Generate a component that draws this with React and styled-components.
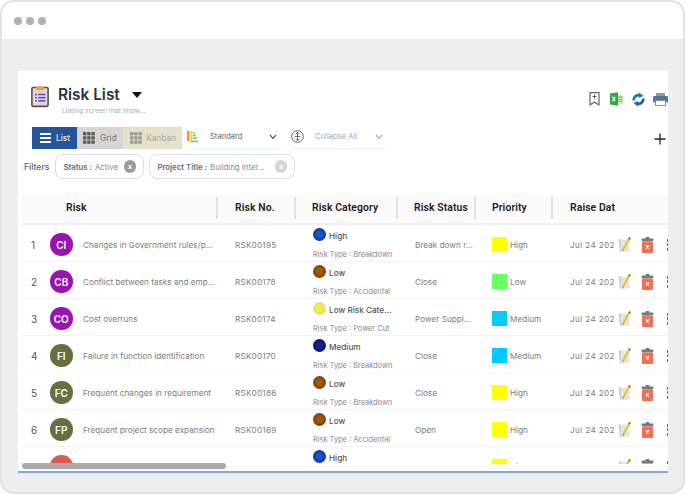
import React from "react";
import styled, { createGlobalStyle } from "styled-components";

const Global = createGlobalStyle`
  html, body { margin: 0; padding: 0; background: #fff; }
  body { font-family: Inter, "Liberation Sans", sans-serif; width: 685px; height: 494px; overflow: hidden; }
  * { box-sizing: border-box; }
`;

const Window = styled.div`
  width: 685px; height: 494px; border-radius: 14px; border: 2px solid #e2e2e2;
  background: #eeeeee; overflow: hidden; display: flex; flex-direction: column;
`;
const TitleBar = styled.div`
  height: 37px; flex: none; background: #fff; display: flex; align-items: center; gap: 4.5px; padding: 1px 0 0 12px;
`;
const Dot = styled.span`width: 7.5px; height: 7.5px; border-radius: 50%; background: #b3b3b3;`;
const Stage = styled.div`flex: 1; padding: 32px 0 0 16px; min-height: 0;`;
const Panel = styled.main`
  position: relative; height: 402px; width: 650px; background: #fff; border-bottom: 2px solid #7ea9dc;
  overflow: hidden; display: flex; flex-direction: column;
`;
const Head = styled.header`
  height: 56px; flex: none; display: flex; padding: 13px 0 0 13px; gap: 9px;
`;
const TitleBlock = styled.div`display: flex; flex-direction: column;`;
const TitleRow = styled.div`display: flex; align-items: center; gap: 12px; height: 22px;`;
const Title = styled.h1`margin: 0; font-size: 15.4px; line-height: 22px; font-weight: 600; color: #2b3442;`;
const Caret = styled.span`
  width: 0; height: 0; border-left: 5px solid transparent; border-right: 5px solid transparent; border-top: 6px solid #111;
`;
const Sub = styled.div`font-size: 6.8px; line-height: 9px; margin: 0 0 0 4px; color: #a9afb8; white-space: nowrap;`;
const HeadIcons = styled.div`
  margin-left: auto; margin-top: 8px; display: flex; height: 16px; align-items: flex-start;
`;
const HeadIcon = styled.span`display: block; margin-right: ${p => p.$mr}px; height: 15px;`;
const Toolbar = styled.div`height: 22px; flex: none; display: flex; padding-left: 14px; align-items: stretch;`;
const ViewBtn = styled.div`
  width: ${p => p.$w}px; background: ${p => p.$bg}; color: ${p => p.$fg}; font-size: 8.4px;
  display: flex; align-items: center; gap: ${p => p.$gap}px; padding-left: ${p => p.$pl}px;
`;
const SelectBox = styled.div`
  width: ${p => p.$w}px; margin-left: ${p => p.$ml}px; display: flex; align-items: center; height: 22px;
  border-bottom: 1px solid #eef1f5; font-size: 7.6px; color: ${p => p.$fg}; padding-bottom: 2px;
`;
const SelectLabel = styled.span`margin-left: ${p => p.$ml}px; flex: 1;`;
const Plus = styled.div`margin-left: auto; margin-right: 1px; margin-top: 3px; width: 14px; height: 14px;`;
const Filters = styled.div`
  height: 25px; margin-top: 5px; flex: none; display: flex; align-items: center; padding-left: 6px; gap: 5px;
`;
const FiltersLabel = styled.span`font-size: 8.6px; font-weight: 500; color: #566; margin-right: 1px;`;
const Chip = styled.div`
  width: ${p => p.$w}px; height: 25px; border: 1px solid #d6dfea; border-radius: 8px; display: flex; align-items: center;
  padding: 0 7px 0 7px; font-size: 7.8px; color: #8a8a8a; white-space: nowrap;
`;
const ChipKey = styled.b`font-weight: 600; color: #6d6d6d; margin-right: 3px;`;
const ChipX = styled.span`
  margin-left: auto; width: 12.5px; height: 12.5px; border-radius: 50%; background: ${p => p.$bg}; color: #fff;
  font-size: 7px; font-weight: 700; display: flex; align-items: center; justify-content: center;
`;
const Table = styled.div`margin: 16px 0 0 4px; flex: none; width: 646px;`;
const cols = "196px 78px 102px 78px 77px 1fr";
const HeaderRow = styled.div`
  display: grid; grid-template-columns: ${cols}; height: 30px; background: #fafafa; border-bottom: 2px solid #eef0f2;
  align-items: center; padding-bottom: 2px;
`;
const HeadCell = styled.div`
  font-family: Roboto, "Liberation Sans", sans-serif; font-size: 10.4px; font-weight: 600; color: #222;
  letter-spacing: .1px; height: 22px; line-height: 22px; padding-left: ${p => p.$pl}px;
  border-right: ${p => p.$noSep ? "0" : "2px solid #dfe3e8"}; white-space: nowrap;
`;
const Body = styled.div`height: 239px; overflow: hidden;`;
const Row = styled.div`
  display: grid; grid-template-columns: ${cols}; height: 37px; border-bottom: 1px solid #f3f3f3;
  font-size: 8.2px; color: #7d7d7d; align-items: center; padding-top: 2px;
`;
const RiskCell = styled.div`display: flex; align-items: center; height: 100%; white-space: nowrap;`;
const Num = styled.span`width: 28px; flex: none; padding-left: 9px; font-size: 10px; color: #555;`;
const Avatar = styled.span`
  width: 22.5px; height: 22.5px; flex: none; border-radius: 50%; background: ${p => p.$bg}; color: #fff; font-size: 10px;
  font-weight: 600; display: flex; align-items: center; justify-content: center;
`;
const RiskName = styled.span`margin-left: 10.5px; font-size: 8.2px;`;
const Plain = styled.div`padding-left: 17px; white-space: nowrap; letter-spacing: ${p => p.$ls || 0}px;`;
const CatCell = styled.div`
  padding-left: 17px; display: flex; flex-direction: column; height: 37px; margin-top: -2px; white-space: nowrap;
`;
const CatTop = styled.div`
  display: flex; align-items: center; gap: 3px; height: 20px; margin-top: 1px; font-size: 8.2px; font-weight: 500; color: #555;
`;
const Bubble = styled.span`
  width: 13px; height: 13px; border-radius: 50%; margin-bottom: 3px; flex: none;
  background: radial-gradient(circle, ${p => p.$a} 25%, ${p => p.$b} 85%);
`;
const CatType = styled.div`font-size: 7.4px; line-height: 9px; margin-top: 4px; color: #8a8a8a;`;
const PriorityCell = styled.div`padding-left: 16px; display: flex; align-items: center; gap: 3px;`;
const Swatch = styled.span`width: 15px; height: 15px; background: ${p => p.$bg};`;
const LastCell = styled.div`padding-left: 17px; display: flex; align-items: center; height: 100%;`;
const DateText = styled.span`
  width: 44px; margin-right: 4px; overflow: hidden; white-space: nowrap; flex: none; letter-spacing: .35px;
`;
const Kebab = styled.div`display: flex; flex-direction: column; gap: 1.5px; margin-left: 13px;`;
const KebabDot = styled.span`width: 3px; height: 3px; border-radius: 1px; background: #555;`;
const Scrollbar = styled.div`
  position: absolute; left: 4px; bottom: 2px; width: 204px; height: 6px; border-radius: 3px; background: #aaaaaa;
`;

const ClipIcon = () => (
  <svg width="18" height="24" viewBox="0 0 20 26" style={{ flex: "none" }}>
    <rect x="1" y="3.5" width="18" height="21" rx="1.5" fill="#ded8dc" stroke="#6b4d46" strokeWidth="1.8" />
    <path d="M6 4.5 V3 H8.2 A2 2 0 0 1 11.8 3 H14 V6.5 H6Z" fill="#f5a21b" />
    <rect x="4.5" y="10.5" width="2" height="1.7" fill="#5d4bb0" /><rect x="8" y="10.5" width="8" height="1.7" fill="#5d4bb0" />
    <rect x="4.5" y="14" width="2" height="1.7" fill="#5d4bb0" /><rect x="8" y="14" width="8" height="1.7" fill="#5d4bb0" />
    <rect x="4.5" y="17.5" width="2" height="1.7" fill="#5d4bb0" /><rect x="8" y="17.5" width="8" height="1.7" fill="#5d4bb0" />
  </svg>
);
const BookmarkIcon = () => (
  <svg width="11" height="14" viewBox="0 0 11 14" style={{ display: "block" }}>
    <path d="M1 .7 H10 V13 L5.5 10 L1 13Z" fill="none" stroke="#666" strokeWidth="1.2" />
    <path d="M5.5 2.6 V6.4 M3.6 4.5 H7.4" stroke="#555" strokeWidth="1" />
  </svg>
);
const ExcelIcon = () => (
  <svg width="13" height="14" viewBox="0 0 13 14" style={{ display: "block" }}>
    <rect x="6" y="2.5" width="7" height="9.5" fill="#cfeccd" />
    <path d="M8 5 H12.5 M8 7.3 H12.5 M8 9.6 H12.5" stroke="#5cc060" strokeWidth="1" />
    <path d="M0 1.4 L8 .2 V13.8 L0 12.6Z" fill="#36a83f" />
    <path d="M2.4 4.8 L5.2 9.2 M5.2 4.8 L2.4 9.2" stroke="#fff" strokeWidth="1.2" />
  </svg>
);
const SyncIcon = () => (
  <svg width="13" height="15" viewBox="0 0 14 15" style={{ display: "block" }}>
    <path d="M2 8.5 A5 5 0 0 1 9 3.2" fill="none" stroke="#1378bf" strokeWidth="3" />
    <path d="M7.6 0 L12.4 3.8 L7.2 6Z" fill="#1378bf" />
    <path d="M12 6.5 A5 5 0 0 1 5 11.8" fill="none" stroke="#1c62a5" strokeWidth="3" />
    <path d="M6.4 15 L1.6 11.2 L6.8 9Z" fill="#1c62a5" />
  </svg>
);
const PrinterIcon = () => (
  <svg width="15" height="13" viewBox="0 0 15 13" style={{ display: "block", marginTop: 1 }}>
    <rect x="3" y="0" width="9" height="3.5" fill="#8d97a3" />
    <rect x="0" y="3" width="15" height="6.5" rx="1.2" fill="#53759b" />
    <rect x="2.5" y="7.5" width="10" height="5" fill="#fff" stroke="#7f94ad" />
  </svg>
);
const ListGlyph = () => (
  <svg width="11" height="10" viewBox="0 0 11 10"><path d="M0 1 H11 M0 5 H11 M0 9 H11" stroke="#fff" strokeWidth="1.8" /></svg>
);
const GridGlyph = ({ c }) => (
  <svg width="12" height="12" viewBox="0 0 12 12" fill={c}>
    {[0, 4.2, 8.4].flatMap(x => [0, 4.2, 8.4].map(y => <rect key={`${x}-${y}`} x={x} y={y} width="3.4" height="3.4" />))}
  </svg>
);
const BarsIcon = () => (
  <svg width="11" height="12" viewBox="0 0 11 12" style={{ marginLeft: 1, flex: "none" }}>
    <rect x="0" y="0" width="2.5" height="10" fill="#f5931f" />
    <rect x="3.5" y="0" width="2" height="10" fill="#f0d24a" />
    <path d="M6 2 H8 M6 4.5 H9 M6 7 H10 M3.5 10.5 H11" stroke="#62d65a" strokeWidth="1.3" />
  </svg>
);
const Chevron = ({ c, mr }) => (
  <svg width="8" height="6" viewBox="0 0 8 6" style={{ marginRight: mr }}>
    <path d="M1 1 L4 4.4 L7 1" fill="none" stroke={c} strokeWidth="1.2" />
  </svg>
);
const ExpandIcon = () => (
  <svg width="13" height="13" viewBox="0 0 13 13" style={{ flex: "none" }}>
    <circle cx="6.5" cy="6.5" r="5.8" fill="none" stroke="#555" strokeWidth=".9" />
    <path d="M6.5 2.2 V10.8 M4.8 4 L6.5 2.2 L8.2 4 M4.8 9 L6.5 10.8 L8.2 9 M3.8 6.5 H9.2" fill="none" stroke="#555" strokeWidth=".8" />
  </svg>
);
const PlusIcon = () => (
  <svg width="14" height="14" viewBox="0 0 14 14"><path d="M7 1.5 V12.5 M1.5 7 H12.5" stroke="#222" strokeWidth="1.3" /></svg>
);
const EditIcon = () => (
  <svg width="14" height="16" viewBox="0 0 14 16" style={{ flex: "none" }}>
    <path d="M0.5 2.5 H10 L12 14 Q6 15.6 2 15 Z" fill="#e4e4e0" />
    <path d="M0.5 2.5 H3 V15 H2Z" fill="#d2d2cc" />
    <path d="M5 12.8 L11.6 1.2" stroke="#e9c233" strokeWidth="2" />
    <path d="M11 2.2 L12 .5" stroke="#8a6a2a" strokeWidth="2" />
    <path d="M4.4 14 L5 12.2 L6 12.9Z" fill="#555" />
  </svg>
);
const TrashIcon = () => (
  <svg width="13" height="16" viewBox="0 0 13 16" style={{ flex: "none", marginLeft: 9 }}>
    <rect x="4.5" y="0" width="4" height="2" rx=".8" fill="#6c7d85" />
    <rect x="0.5" y="1.5" width="12" height="2.4" rx=".8" fill="#6c7d85" />
    <rect x="1" y="4.2" width="11" height="11.8" rx="1" fill="#ea7259" />
    <path d="M5 8.5 L8 11.5 M8 8.5 L5 11.5" stroke="#fff" strokeWidth="1.1" />
  </svg>
);

const purple = "#9a12b3", olive = "#667040", red = "#dd5a4e";
const high = ["#1a55cc", "#0b2a90"], low = ["#a15a0d", "#703804"], lowCat = ["#f3ee3c", "#dcd98a"], med = ["#12248a", "#060e48"];
const rows = [
  { n: 1, i: "CI", c: purple, name: "Changes in Government rules/p...", no: "RSK00195", cat: "High", b: high, type: "Breakdown", st: "Break down r...", p: "High", pc: "#ffff00" },
  { n: 2, i: "CB", c: purple, name: "Conflict between tasks and emp...", no: "RSK00178", cat: "Low", b: low, type: "Accidental", st: "Close", p: "Low", pc: "#66ff66" },
  { n: 3, i: "CO", c: purple, name: "Cost overruns", no: "RSK00174", cat: "Low Risk Cate...", b: lowCat, type: "Power Cut", st: "Power Suppl...", p: "Medium", pc: "#00ccff" },
  { n: 4, i: "FI", c: olive, name: "Failure in function identification", no: "RSK00170", cat: "Medium", b: med, type: "Breakdown", st: "Close", p: "Medium", pc: "#00ccff" },
  { n: 5, i: "FC", c: olive, name: "Frequent changes in requirement", no: "RSK00186", cat: "Low", b: low, type: "Breakdown", st: "Close", p: "High", pc: "#ffff00" },
  { n: 6, i: "FP", c: olive, name: "Frequent project scope expansion", no: "RSK00169", cat: "Low", b: low, type: "Accidental", st: "Open", p: "High", pc: "#ffff00" },
  { n: 7, i: "HC", c: red, name: "Hardware constraints", no: "RSK00166", cat: "High", b: high, type: "Breakdown", st: "Close", p: "High", pc: "#ffff00" },
];

export default function App() {
  return (
    <Window>
      <Global />
      <TitleBar><Dot /><Dot /><Dot /></TitleBar>
      <Stage>
        <Panel>
          <Head>
            <ClipIcon />
            <TitleBlock>
              <TitleRow><Title>Risk List</Title><Caret /></TitleRow>
              <Sub>Listing screen that show...</Sub>
            </TitleBlock>
            <HeadIcons>
              <HeadIcon $mr={10}><BookmarkIcon /></HeadIcon>
              <HeadIcon $mr={9}><ExcelIcon /></HeadIcon>
              <HeadIcon $mr={8}><SyncIcon /></HeadIcon>
              <HeadIcon $mr={0}><PrinterIcon /></HeadIcon>
            </HeadIcons>
          </Head>
          <Toolbar>
            <ViewBtn $w={45} $pl={8} $gap={5} $bg="#24549a" $fg="#fff"><ListGlyph />List</ViewBtn>
            <ViewBtn $w={46} $pl={6} $gap={5} $bg="#d6d4d4" $fg="#777"><GridGlyph c="#615a56" />Grid</ViewBtn>
            <ViewBtn $w={59} $pl={7} $gap={4} $bg="#e5e1c8" $fg="#a9a9a0"><GridGlyph c="#9d9a94" />Kanban</ViewBtn>
            <SelectBox $w={94} $ml={4} $fg="#666"><BarsIcon /><SelectLabel $ml={12}>Standard</SelectLabel><Chevron c="#555" mr={3} /></SelectBox>
            <SelectBox $w={94} $ml={11} $fg="#aaa"><ExpandIcon /><SelectLabel $ml={11}>Collapse All</SelectLabel><Chevron c="#aaa" mr={2} /></SelectBox>
            <Plus><PlusIcon /></Plus>
          </Toolbar>
          <Filters>
            <FiltersLabel>Filters</FiltersLabel>
            <Chip $w={89}><ChipKey>Status :</ChipKey>Active<ChipX $bg="#a09a9a">x</ChipX></Chip>
            <Chip $w={146}><ChipKey>Project Title :</ChipKey>Building Inter...<ChipX $bg="#d4d4d4">x</ChipX></Chip>
          </Filters>
          <Table>
            <HeaderRow>
              <HeadCell $pl={44}>Risk</HeadCell>
              <HeadCell $pl={17}>Risk No.</HeadCell>
              <HeadCell $pl={16}>Risk Category</HeadCell>
              <HeadCell $pl={16}>Risk Status</HeadCell>
              <HeadCell $pl={16}>Priority</HeadCell>
              <HeadCell $pl={17} $noSep>Raise Dat</HeadCell>
            </HeaderRow>
            <Body>
              {rows.map(r => (
                <Row key={r.n}>
                  <RiskCell>
                    <Num>{r.n}</Num>
                    <Avatar $bg={r.c}>{r.i}</Avatar>
                    <RiskName>{r.name}</RiskName>
                  </RiskCell>
                  <Plain $ls={0.2}>{r.no}</Plain>
                  <CatCell>
                    <CatTop><Bubble $a={r.b[0]} $b={r.b[1]} />{r.cat}</CatTop>
                    <CatType>Risk Type : {r.type}</CatType>
                  </CatCell>
                  <Plain>{r.st}</Plain>
                  <PriorityCell><Swatch $bg={r.pc} />{r.p}</PriorityCell>
                  <LastCell>
                    <DateText>Jul 24 2021</DateText>
                    <EditIcon /><TrashIcon />
                    <Kebab><KebabDot /><KebabDot /><KebabDot /></Kebab>
                  </LastCell>
                </Row>
              ))}
            </Body>
          </Table>
          <Scrollbar />
        </Panel>
      </Stage>
    </Window>
  );
}
